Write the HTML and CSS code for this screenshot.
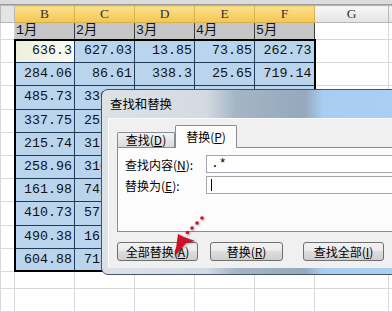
FILE: index.html
```html
<!DOCTYPE html>
<html lang="zh-CN">
<head>
  <meta charset="UTF-8">
  <title>查找和替换</title>
  <link rel="stylesheet" href="styles.css">
</head>
<body>
  <div class="band"></div>
  <table class="sheet">
    <colgroup>
      <col class="c-rh">
      <col class="c"><col class="c"><col class="c"><col class="c"><col class="c">
      <col class="c-g">
      <col>
    </colgroup>
    <!-- column letters -->
    <tr class="hdr">
      <th class="corner"></th>
      <th class="on">B</th><th class="on">C</th><th class="on">D</th><th class="on">E</th><th class="on">F</th>
      <th class="off">G</th><th class="off"></th>
    </tr>
    <!-- month row -->
    <tr class="months">
      <td></td>
      <td class="m">1月</td><td class="m">2月</td><td class="m">3月</td><td class="m">4月</td><td class="m">5月</td>
      <td></td><td></td>
    </tr>
    <!-- data -->
    <tr class="row first"><td></td><td class="v a">636.3</td><td class="v">627.03</td><td class="v">13.85</td><td class="v">73.85</td><td class="v">262.73</td><td></td><td></td></tr>
    <tr class="row"><td></td><td class="v">284.06</td><td class="v">86.61</td><td class="v">338.3</td><td class="v">25.65</td><td class="v">719.14</td><td></td><td></td></tr>
    <tr class="row"><td></td><td class="v">485.73</td><td class="v">336.52</td><td class="v">512.4</td><td class="v">98.21</td><td class="v">450.36</td><td></td><td></td></tr>
    <tr class="row"><td></td><td class="v">337.75</td><td class="v">251.43</td><td class="v">47.9</td><td class="v">130.5</td><td class="v">66.18</td><td></td><td></td></tr>
    <tr class="row"><td></td><td class="v">215.74</td><td class="v">317.66</td><td class="v">205.1</td><td class="v">88.47</td><td class="v">301.2</td><td></td><td></td></tr>
    <tr class="row"><td></td><td class="v">258.96</td><td class="v">310.25</td><td class="v">19.33</td><td class="v">412.6</td><td class="v">57.84</td><td></td><td></td></tr>
    <tr class="row"><td></td><td class="v">161.98</td><td class="v">742.16</td><td class="v">683.5</td><td class="v">29.71</td><td class="v">144.09</td><td></td><td></td></tr>
    <tr class="row"><td></td><td class="v">410.73</td><td class="v">577.81</td><td class="v">92.64</td><td class="v">356.2</td><td class="v">81.5</td><td></td><td></td></tr>
    <tr class="row"><td></td><td class="v">490.38</td><td class="v">167.35</td><td class="v">240.8</td><td class="v">63.17</td><td class="v">518.9</td><td></td><td></td></tr>
    <tr class="row last"><td></td><td class="v">604.88</td><td class="v">713.29</td><td class="v">35.06</td><td class="v">277.4</td><td class="v">409.52</td><td></td><td></td></tr>
    <!-- empty rows under the data -->
    <tr class="short"><td></td><td></td><td></td><td></td><td></td><td></td><td></td><td></td></tr>
    <tr class="row"><td></td><td></td><td></td><td></td><td></td><td></td><td></td><td></td></tr>
  </table>

  <!-- Find and replace dialog -->
  <div class="dlg">
    <div class="dlg-title">查找和替换</div>
    <div class="dlg-body">
      <div class="tabs">
        <div class="tab">查找(<u>D</u>)</div>
        <div class="tab on">替换(<u>P</u>)</div>
      </div>
      <div class="panel">
        <div class="field">
          <label>查找内容(<u>N</u>):</label>
          <div class="input">.*</div>
        </div>
        <div class="field">
          <label>替换为(<u>E</u>):</label>
          <div class="input"><span class="caret"></span></div>
        </div>
      </div>
      <div class="buttons">
        <button class="btn wide">全部替换(<u>A</u>)</button>
        <button class="btn">替换(<u>R</u>)</button>
        <button class="btn wide far">查找全部(<u>I</u>)</button>
      </div>
    </div>
  </div>

  <!-- red pointer -->
  <svg class="arrow" width="45" height="55" viewBox="0 0 45 55">
    <circle cx="37" cy="8" r="1.8"/>
    <circle cx="32" cy="13" r="1.8"/>
    <circle cx="27" cy="18" r="1.8"/>
    <circle cx="22.5" cy="22.5" r="1.8"/>
    <polygon points="13,24 19,27 30,31 21,33 10,46"/>
  </svg>
</body>
</html>
```

FILE: styles.css
```css
* {
  box-sizing: border-box;
}
body {
  margin: 0;
  width: 392px;
  height: 312px;
  overflow: hidden;
  position: relative;
  background: #fff;
  font-family: "Liberation Mono", "Noto Sans CJK SC", monospace;
}
.band {
  height: 5px;
  background: #dcdcdc;
  border-bottom: 1px solid #9c9c9c;
}

/* sheet */
.sheet {
  border-collapse: collapse;
  table-layout: fixed;
  width: 400px;
  font-size: 13.3px;
  color: #111;
}
.c-rh { width: 14px; }
.c { width: 60px; }
.c-g { width: 74px; }
.sheet td,
.sheet th {
  border: 1px solid #d6d8dc;
  padding: 0 1px;
  white-space: nowrap;
  overflow: hidden;
  line-height: 14px;
}
.hdr th {
  height: 17px;
  font-family: "Liberation Serif", serif;
  font-weight: normal;
  font-size: 13.5px;
  color: #333;
}
.hdr .corner {
  background: #e4e4e4;
  border-color: #b8b8b8;
}
.hdr .on {
  background: linear-gradient(#fbe18f, #f4c650);
  border-color: #d9b250;
}
.hdr .off {
  background: linear-gradient(#f8f8f8, #e3e3e3);
  border-color: #b8b8b8;
}
.months td {
  height: 17px;
}
.months .m {
  background: #c6c6c6;
  border-color: #9a9a9a #3c3c3c;
  text-align: left;
}
.row td {
  height: 23.2px;
}
.short td {
  height: 17px;
}
.v {
  background: #b9d4ec;
  text-align: right;
  padding-right: 2px !important;
  border-color: #1f3b58 !important;
}
.v.a {
  background: linear-gradient(90deg, #eef0dc, #fbfbf3);
}
.first .v { border-top: 2px solid #000 !important; }
.last .v { border-bottom: 2px solid #000 !important; }
.v:nth-child(2) { border-left: 2px solid #000 !important; }
.v:nth-child(6) { border-right: 2px solid #000 !important; }

/* dialog */
.dlg {
  position: absolute;
  left: 101px;
  top: 89px;
  width: 300px;
  height: 186px;
  border: 1px solid #44556a;
  border-radius: 7px;
  padding: 0 0 6px 6px;
  background: linear-gradient(90deg, #dde2e7 0, #d3dae1 35%, #a4b5c6 45%, #95a9bd 68%, #a8cdf0 74%, #aacff2 100%);
  font-family: "Noto Sans CJK SC", sans-serif;
  font-size: 12px;
  color: #000;
  display: flex;
  flex-direction: column;
}
.dlg-title {
  height: 28px;
  line-height: 28px;
  padding-left: 2px;
  font-size: 12.4px;
}
.dlg-body {
  flex: 1;
  background: #f0f0f0;
  border-top: 1px solid #fafafa;
  border-left: 1px solid #fafafa;
  padding: 6px 0 0 8px;
}
.tabs {
  display: flex;
  align-items: flex-end;
  height: 22px;
}
.tab {
  width: 58px;
  height: 15px;
  border: 1px solid #898c95;
  border-bottom: none;
  border-radius: 2px 2px 0 0;
  background: linear-gradient(#f3f3f3, #dadada);
  text-align: center;
  line-height: 14px;
}
.tab.on {
  width: 62px;
  height: 23px;
  margin-bottom: -1px;
  background: #fcfcfc;
  line-height: 22px;
  position: relative;
}
.panel {
  height: 85px;
  border: 1px solid #898c95;
  border-right: none;
  background: #fcfcfc;
  padding: 7px 0 0 7px;
  display: flex;
  flex-direction: column;
  gap: 3px;
}
.field {
  display: flex;
  align-items: center;
}
.field label {
  width: 81px;
}
.input {
  flex: 1;
  height: 18px;
  border: 1px solid #a4a6ad;
  background: #fff;
  padding-left: 4px;
  font-family: "Liberation Mono", monospace;
  font-size: 13px;
  line-height: 16px;
  display: flex;
  align-items: center;
}
.caret {
  width: 1px;
  height: 12px;
  background: #000;
}
.buttons {
  display: flex;
  gap: 12px;
  margin-top: 10px;
}
.btn {
  width: 73px;
  height: 19px;
  padding: 0;
  border: 1px solid #707070;
  border-radius: 3px;
  background: linear-gradient(#f2f2f2 0, #ebebeb 45%, #dddddd 50%, #cfcfcf 100%);
  font: inherit;
  line-height: 17px;
  color: #000;
}
.btn.wide { width: 81px; }
.btn.far { margin-left: 8px; }

/* red pointer */
.arrow {
  position: absolute;
  left: 165px;
  top: 210px;
  fill: #d0102a;
  filter: drop-shadow(1px 1px 1px rgba(0, 0, 0, 0.35));
}
```
